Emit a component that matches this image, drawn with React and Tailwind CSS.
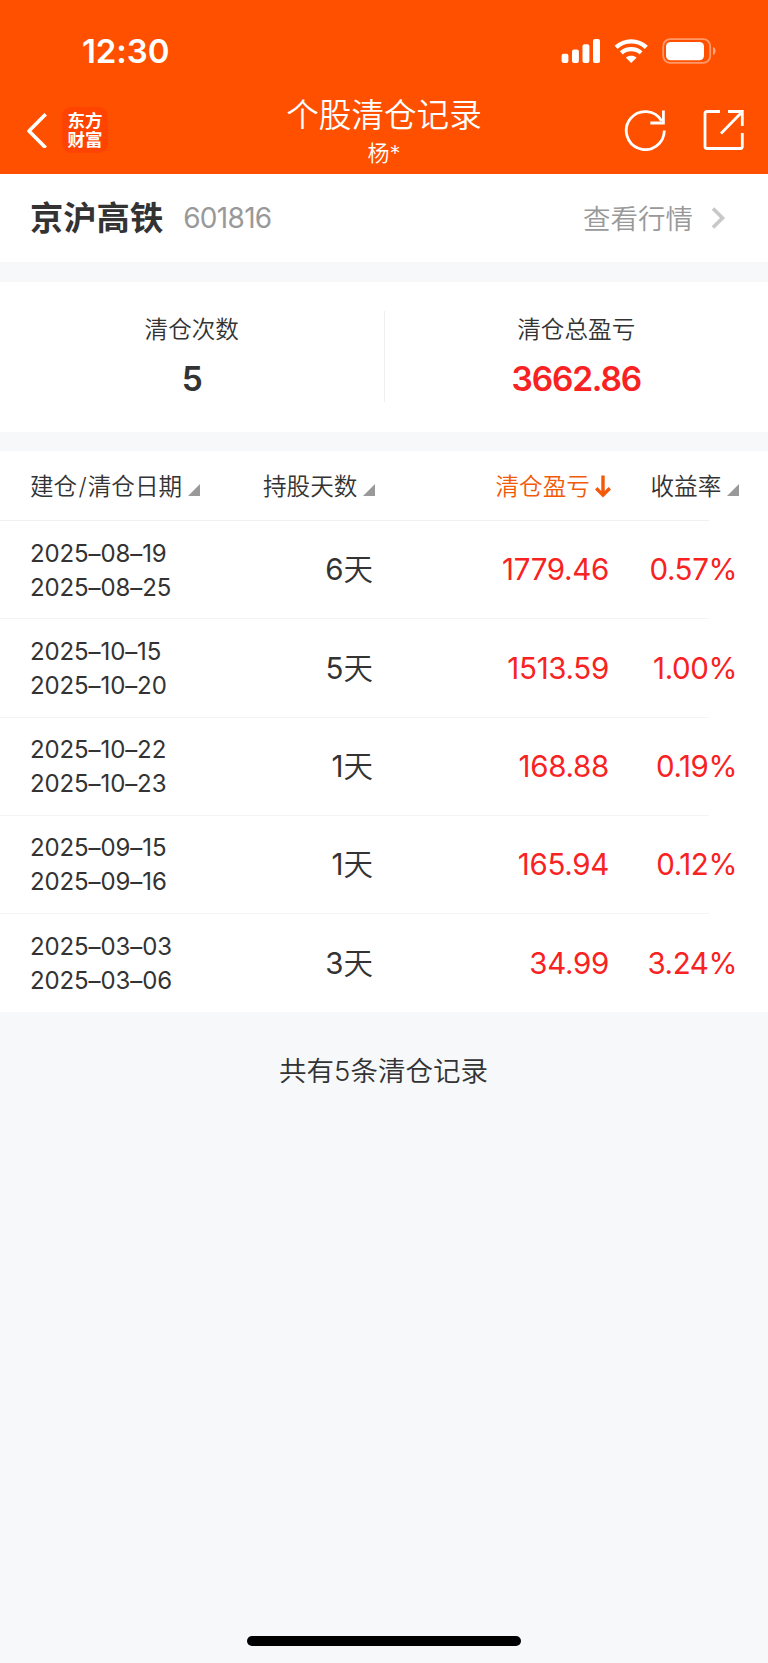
const rows = [
  { open: '2025–08–19', close: '2025–08–25', days: '6', profit: '1779.46', rate: '0.57%' },
  { open: '2025–10–15', close: '2025–10–20', days: '5', profit: '1513.59', rate: '1.00%' },
  { open: '2025–10–22', close: '2025–10–23', days: '1', profit: '168.88', rate: '0.19%' },
  { open: '2025–09–15', close: '2025–09–16', days: '1', profit: '165.94', rate: '0.12%' },
  { open: '2025–03–03', close: '2025–03–06', days: '3', profit: '34.99', rate: '3.24%' },
];

function StatusBar() {
  return (
    <div className="flex h-[101px] items-center justify-between pl-[82px] pr-[52px]">
      <span className="pt-[2px] text-[33px] font-semibold leading-none tracking-[-0.1px]">12:30</span>
      <svg width="156" height="28" viewBox="0 0 156 28" fill="none">
        <g fill="#fff">
          <rect x="1.6" y="16.8" width="6.8" height="9.2" rx="2" />
          <rect x="12" y="12.4" width="6.9" height="13.6" rx="2" />
          <rect x="22.5" y="7.2" width="6.9" height="18.8" rx="2" />
          <rect x="33" y="2" width="7" height="24" rx="2" />
          <path d="M71.2 26 65.9 20.7C68.6 18.1 73.8 18.1 76.5 20.7Z" />
        </g>
        <path d="M61.3 15.9C66.6 10.9 75.8 10.9 81.1 15.9" stroke="#fff" strokeWidth="4.2" />
        <path d="M56.1 10.4C64.5 2.3 77.9 2.3 86.3 10.4" stroke="#fff" strokeWidth="4.4" />
        <rect x="103.2" y="2.2" width="47" height="23.7" rx="7" stroke="#fff" strokeOpacity=".42" strokeWidth="1.8" />
        <rect x="106" y="5" width="38" height="18.2" rx="4.5" fill="#fff" />
        <path d="M153 10C156.4 11 156.4 17 153 18Z" fill="#fff" fillOpacity=".5" />
      </svg>
    </div>
  );
}

function NavBar() {
  return (
    <div className="grid h-[72px] grid-cols-[1fr_auto_1fr] items-start">
      <div className="flex items-center pl-[26px] pt-[6px]">
        <svg width="21" height="36" viewBox="0 0 21 36" fill="none">
          <path d="M18.4 3.5 3 19 18.4 34.5" stroke="#fff" strokeWidth="3.6" strokeLinecap="square" strokeLinejoin="round" />
        </svg>
        <div className="ml-[15px] flex h-[46px] w-[46px] flex-col items-center justify-center rounded-[9px] bg-[#ff4300] text-[17.5px] font-bold leading-[19.5px]">
          <span>东方</span>
          <span>财富</span>
        </div>
      </div>
      <div className="flex flex-col items-center font-[350]">
        <h1 className="mt-[-6px] text-[32.6px] leading-[40px]">个股清仓记录</h1>
        <span className="mt-[2px] text-[22px] leading-[32px]">杨*</span>
      </div>
      <div className="flex items-center justify-end gap-[36px] pr-[24px] pt-[8px]">
        <svg width="42" height="42" viewBox="0 0 42 42" fill="none" stroke="#fff" strokeWidth="2.8">
          <path d="M40.3 21.5A19 19 0 1 1 37.7 12" />
          <path d="M39.4 1.5V14H26.3" />
        </svg>
        <svg width="42" height="42" viewBox="0 0 42 42" fill="none" stroke="#fff" strokeWidth="2.8">
          <path d="M18 2.5H5Q3 2.5 3 4.5V37.5Q3 39.5 5 39.5H38.5Q40.3 39.5 40.3 37.5V24" />
          <path d="M26 2.5H40.3V17M40 3 19 24.4" />
        </svg>
      </div>
    </div>
  );
}

function SortMark() {
  return (
    <svg className="mt-[7px]" width="12" height="12" viewBox="0 0 12 12">
      <path d="M12 0V12H0Z" fill="#999" />
    </svg>
  );
}

function Stat({ label, value, className }) {
  return (
    <div className="flex flex-1 flex-col items-center pt-[30px]">
      <span className="text-[23.6px] font-[350] leading-[36px] text-[#333]">{label}</span>
      <span className={`mt-[11px] text-[33.5px] font-semibold leading-[40px] tracking-[-1.2px] ${className}`}>{value}</span>
    </div>
  );
}

const columns = 'grid grid-cols-[172px_172px_237px_1fr]';

function Record({ row, last }) {
  return (
    <div className="flex h-[98.3px] flex-col justify-between">
      <div className={`${columns} h-[98px] items-center pl-[30px] text-[29.5px] text-[#333]`}>
        <div className="flex flex-col pt-px text-[24px] leading-[34px] tracking-[-0.1px]">
          <span>{row.open}</span>
          <span>{row.close}</span>
        </div>
        <span className="pb-px pr-[1px] text-right">
          {row.days}
          <span className="font-[350]">天</span>
        </span>
        <span className="pb-px pr-[2px] text-right tracking-[-0.3px] text-[#f82222]">{row.profit}</span>
        <span className="pb-px pr-[31px] text-right tracking-[-0.4px] text-[#f82222]">{row.rate}</span>
      </div>
      {!last && <div className="-mt-px h-px w-[709px] shrink-0 bg-[#f4f4f5]" />}
    </div>
  );
}

export default function App() {
  return (
    <div className="flex h-[1663px] w-[768px] flex-col overflow-hidden bg-[#f6f8fa] font-[Inter,'Noto_Sans_CJK_SC',sans-serif] text-[#333]">
      <header className="h-[173.5px] shrink-0 bg-[#ff5000] text-white">
        <StatusBar />
        <NavBar />
      </header>

      <section className="flex h-[88.5px] shrink-0 items-center justify-between bg-white pl-[30px] pr-[42px]">
        <div className="flex items-center gap-[20px]">
          <h2 className="pt-px text-[33.3px] font-bold leading-[44px]">京沪高铁</h2>
          <span className="text-[28px] font-normal tracking-[-0.7px] text-[#999]">601816</span>
        </div>
        <div className="flex items-center gap-[18px] text-[27.5px] font-[350] text-[#999]">
          <span className="pt-[3px]">查看行情</span>
          <svg width="15" height="24" viewBox="0 0 15 24" fill="none">
            <path d="M2 2.5 11.5 12 2 21.5" stroke="#c8c8c8" strokeWidth="3.6" />
          </svg>
        </div>
      </section>

      <section className="mt-[20px] flex h-[149.5px] shrink-0 bg-white">
        <Stat label="清仓次数" value="5" className="text-[#333]" />
        <div className="mt-[29px] h-[91px] w-px bg-[#f0f0f2]" />
        <Stat label="清仓总盈亏" value="3662.86" className="text-[#f82222]" />
      </section>

      <section className="mt-[19.5px] shrink-0 bg-white">
        <div className="flex h-[69px] items-center pl-[30px] pt-[2px] text-[23.6px] font-[350]">
          <div className="flex w-[233px] items-center gap-[6px]">
            <span>
              建仓<span className="px-[1.2px]">/</span>清仓日期
            </span>
            <SortMark />
          </div>
          <div className="flex w-[232.5px] items-center gap-[6px]">
            <span>持股天数</span>
            <SortMark />
          </div>
          <div className="flex w-[155px] items-center gap-[5px] text-[#f25a0a]">
            <span>清仓盈亏</span>
            <svg width="16" height="23" viewBox="0 0 16 23" fill="none" stroke="#f25a0a" strokeWidth="3.4">
              <path d="M8 0.5V20M1.2 13.3 8 20.1 14.8 13.3" />
            </svg>
          </div>
          <div className="flex items-center gap-[6px]">
            <span>收益率</span>
            <SortMark />
          </div>
        </div>
        <div className="h-px w-[709px] bg-[#f0f0f2]" />
        {rows.map((row, i) => (
          <Record key={row.open} row={row} last={i === rows.length - 1} />
        ))}
      </section>

      <p className="mt-[39px] pr-px text-center text-[27.5px] font-[350] leading-[40px]">共有5条清仓记录</p>

      <div className="mx-auto mb-[17px] mt-auto h-[10px] w-[274px] shrink-0 rounded-full bg-black" />
    </div>
  );
}
